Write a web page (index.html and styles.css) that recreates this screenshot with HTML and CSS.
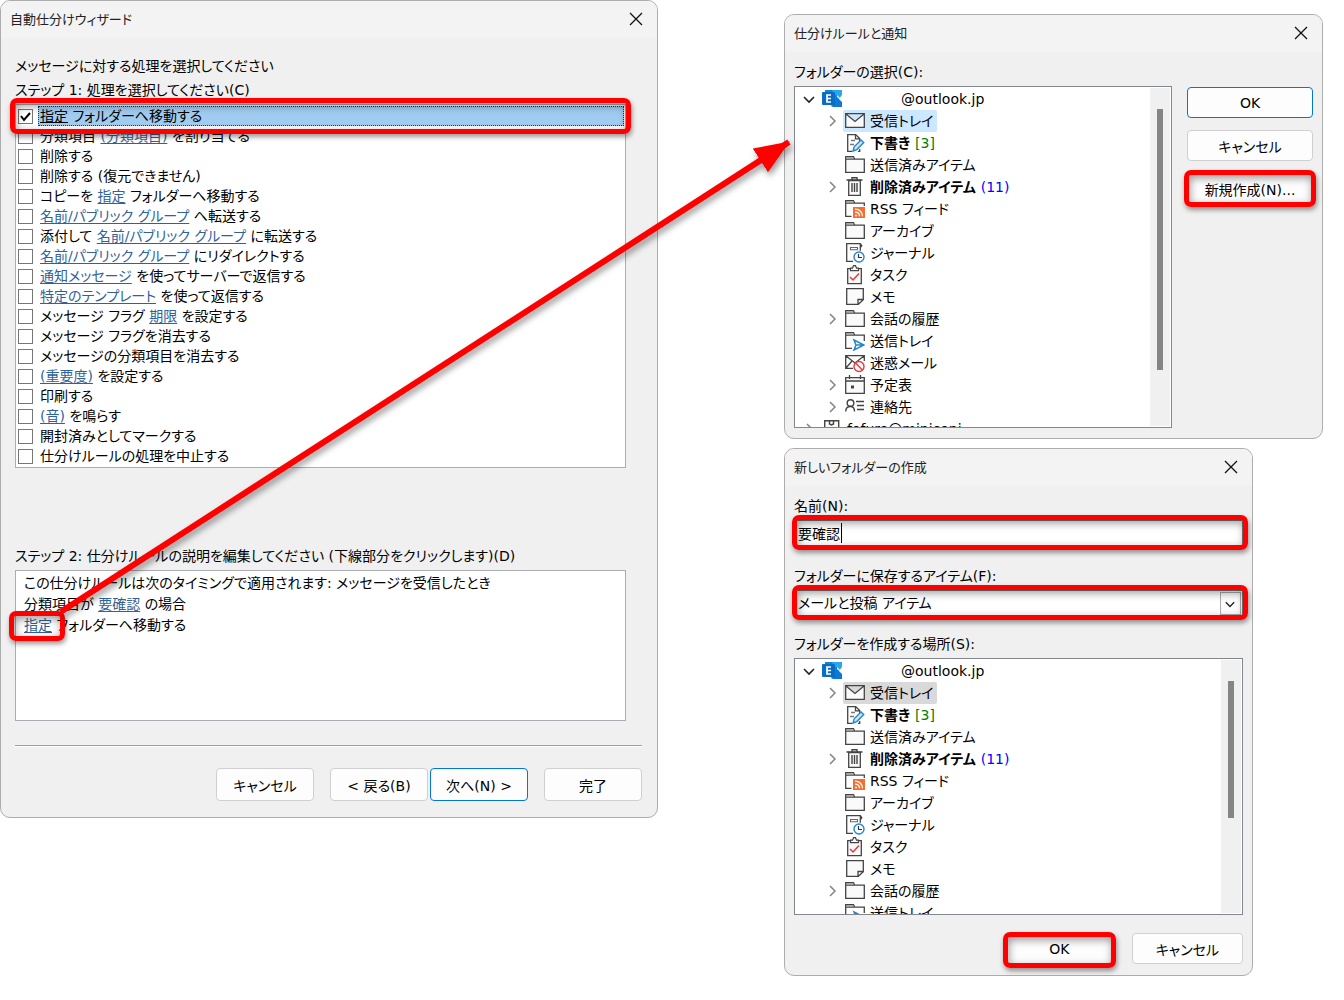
FILE: index.html
```html
<!DOCTYPE html>
<html lang="ja">
<head>
  <meta charset="UTF-8" />
  <meta name="viewport" content="width=device-width, initial-scale=1.0"/>
  <title>自動仕分けウィザード</title>
  <link rel="stylesheet" href="styles.css">
</head>
<body>

  <!-- アイコン -->
  <svg class="sprite" aria-hidden="true">
    <symbol id="i-close" viewBox="0 0 14 14"><path d="M1 1l12 12M13 1L1 13" fill="none" stroke="#111" stroke-width="1.3"/></symbol>
    <symbol id="i-right" viewBox="0 0 12 12"><path d="M4 1l5 5-5 5" fill="none" stroke="#858585" stroke-width="1.5"/></symbol>
    <symbol id="i-down" viewBox="0 0 12 12"><path d="M1 4l5 5 5-5" fill="none" stroke="#222" stroke-width="1.6"/></symbol>
    <symbol id="i-exchange" viewBox="0 0 20 20">
      <path d="M3 1h8l4 5v10H3z" fill="#1482cf"/>
      <path d="M10 1h10v6l-2 2-3-3h-3z" fill="#28a8ea"/>
      <path d="M9 17l6-9 5 4v6H11z" fill="#0f78d4"/>
      <path d="M20 6v7l-3-3z" fill="#fff"/>
      <rect x="0" y="3" width="13" height="13" rx="1" fill="#0a6cc4"/>
      <path d="M9 6H5v7h4M5 9.500h4" fill="none" stroke="#fff" stroke-width="1.700"/>
    </symbol>
    <symbol id="i-mail" viewBox="0 0 20 20"><path d="M.7 2.700h18.600v13.600H.7zM1 3l9 7.500L19 3" fill="#fafafa" stroke="#444" stroke-width="1.300"/></symbol>
    <symbol id="i-draft" viewBox="0 0 20 20">
      <path d="M7 18.400H2.700V1.600h8l4 4V8M10.500 1.600v4.200h4.200M14.700 16v2.400H13" fill="none" stroke="#444" stroke-width="1.300"/>
      <path d="M6 7.500h4M5 11.500h4" stroke="#777" stroke-width="1.300"/>
      <path d="M8 18l1.200-4.200L16 7l2.700 2.600L11.800 16.600z" fill="#cfe6f7" stroke="#2386cc" stroke-width="1.400"/>
    </symbol>
    <symbol id="i-folder" viewBox="0 0 20 20"><path d="M.7 4.200h18.600v13.100H.7zM.7 4.200V1.700h7.800l1.200 2.500" fill="#fafafa" stroke="#444" stroke-width="1.300"/><path d="M1 2.300h7.500v1.200H1z" fill="#999"/></symbol>
    <symbol id="i-trash" viewBox="0 0 20 20"><path d="M3.700 3.500h11.600v14.800H3.700z" fill="#fafafa" stroke="#444" stroke-width="1.300"/><path d="M1.500 3h16M7 2.500V.800h5v1.700M7 6v9M9.500 6v9M12 6v9" fill="none" stroke="#444" stroke-width="1.400"/></symbol>
    <symbol id="i-rss" viewBox="0 0 20 20">
      <path d="M6.500 17.300H.7V1.700h7.800l1.200 2.500h9.600V7M.7 4.200h9" fill="none" stroke="#444" stroke-width="1.300"/><path d="M1 2.300h7.500v1.200H1z" fill="#999"/>
      <rect x="8" y="8" width="12" height="11" fill="#f36f30"/>
      <path d="M10 10.200c4.500 0 7.500 3 7.500 7M10 13.200c3 0 4.500 1.800 4.500 4" fill="none" stroke="#fff" stroke-width="1.300"/><circle cx="11" cy="16.500" r="1" fill="#fff"/>
    </symbol>
    <symbol id="i-journal" viewBox="0 0 20 20">
      <path d="M8 18.300H1.700V.700h13.600l1.500 2-1.500 2v3M15.300.700v7" fill="none" stroke="#444" stroke-width="1.300"/>
      <path d="M5.500 4.500h7v2.300h-7z" fill="none" stroke="#666" stroke-width="1.100"/>
      <circle cx="14" cy="14" r="5" fill="#fff" stroke="#2386cc" stroke-width="1.400"/><path d="M13.500 11v3.500H17" fill="none" stroke="#333" stroke-width="1.200"/>
    </symbol>
    <symbol id="i-task" viewBox="0 0 20 20">
      <path d="M2.700 3.700h13.600v15H2.700z" fill="#fafafa" stroke="#444" stroke-width="1.300"/>
      <path d="M5.500 5.700V3.200h2L8.500.700h2l1 2.500h2v2.500z" fill="#fff" stroke="#444" stroke-width="1.200"/>
      <path d="M5 12l3 3 6-6.500" fill="none" stroke="#e8373b" stroke-width="1.500"/>
    </symbol>
    <symbol id="i-note" viewBox="0 0 20 20"><path d="M1.700 1.700h16.600v11l-5 4.600H1.700zM18 12.500h-5v4.700" fill="#fafafa" stroke="#444" stroke-width="1.300"/></symbol>
    <symbol id="i-outbox" viewBox="0 0 20 20">
      <path d="M7 17.300H.7V1.700h7.800l1.200 2.500h9.600V10M.7 4.200h9" fill="none" stroke="#444" stroke-width="1.300"/><path d="M1 2.300h7.500v1.200H1z" fill="#999"/>
      <path d="M9 9l10 5-10 5 2-5zM11 14h8" fill="none" stroke="#2386cc" stroke-width="1.500"/>
    </symbol>
    <symbol id="i-junk" viewBox="0 0 20 20">
      <path d="M8 15.300H.7V2.700h18.600V8M1 3l9 7 9-7M1 15l6-7" fill="none" stroke="#444" stroke-width="1.300"/>
      <circle cx="14" cy="13.500" r="5" fill="#fff" stroke="#e8373b" stroke-width="1.400"/><path d="M10.500 10l7 7" stroke="#e8373b" stroke-width="1.400"/>
    </symbol>
    <symbol id="i-calendar" viewBox="0 0 20 20"><path d="M.7 2.700h18.600v15.600H.7z" fill="#fafafa" stroke="#444" stroke-width="1.300"/><path d="M1 6h18M4.500 0v4M15.500 0v4" stroke="#444" stroke-width="1.300"/><path d="M6 10.500h3v3H6z" fill="#444"/></symbol>
    <symbol id="i-contact" viewBox="0 0 20 20"><circle cx="5.500" cy="6" r="3.300" fill="none" stroke="#444" stroke-width="1.400"/><path d="M.7 14.500c0-3.500 2-5 4.800-5s4 1.500 4 5M11 4.500h8M12 8.500h7M12 12.500h7" fill="none" stroke="#444" stroke-width="1.400"/></symbol>
    <symbol id="i-store" viewBox="0 0 20 20"><path d="M2.700 1.700h14v16h-14z" fill="#fafafa" stroke="#444" stroke-width="1.400"/><path d="M7.500 2v3l2 1 2-1V2" fill="none" stroke="#444" stroke-width="1.400"/></symbol>
  </svg>

  <main class="canvas">

    <!-- 自動仕分けウィザード -->
    <section class="dialog wizard">
      <header class="titlebar">
        <h1>自動仕分けウィザード</h1>
        <button class="close" aria-label="閉じる"><svg><use href="#i-close"/></svg></button>
      </header>
      <div class="wizard-body">
        <p class="line">メッセージに対する処理を選択してください</p>
        <p class="line">ステップ 1: 処理を選択してください(C)</p>
        <ul class="actions">
          <li class="selected marked"><input type="checkbox" id="a1" checked><label for="a1"><u>指定</u> フォルダーへ移動する</label></li>
          <li><input type="checkbox" id="a2"><label for="a2">分類項目 <a href="#">(分類項目)</a> を割り当てる</label></li>
          <li><input type="checkbox" id="a3"><label for="a3">削除する</label></li>
          <li><input type="checkbox" id="a4"><label for="a4">削除する (復元できません)</label></li>
          <li><input type="checkbox" id="a5"><label for="a5">コピーを <a href="#">指定</a> フォルダーへ移動する</label></li>
          <li><input type="checkbox" id="a6"><label for="a6"><a href="#">名前/パブリック グループ</a> へ転送する</label></li>
          <li><input type="checkbox" id="a7"><label for="a7">添付して <a href="#">名前/パブリック グループ</a> に転送する</label></li>
          <li><input type="checkbox" id="a8"><label for="a8"><a href="#">名前/パブリック グループ</a> にリダイレクトする</label></li>
          <li><input type="checkbox" id="a9"><label for="a9"><a href="#">通知メッセージ</a> を使ってサーバーで返信する</label></li>
          <li><input type="checkbox" id="a10"><label for="a10"><a href="#">特定のテンプレート</a> を使って返信する</label></li>
          <li><input type="checkbox" id="a11"><label for="a11">メッセージ フラグ <a href="#">期限</a> を設定する</label></li>
          <li><input type="checkbox" id="a12"><label for="a12">メッセージ フラグを消去する</label></li>
          <li><input type="checkbox" id="a13"><label for="a13">メッセージの分類項目を消去する</label></li>
          <li><input type="checkbox" id="a14"><label for="a14"><a href="#">(重要度)</a> を設定する</label></li>
          <li><input type="checkbox" id="a15"><label for="a15">印刷する</label></li>
          <li><input type="checkbox" id="a16"><label for="a16"><a href="#">(音)</a> を鳴らす</label></li>
          <li><input type="checkbox" id="a17"><label for="a17">開封済みとしてマークする</label></li>
          <li><input type="checkbox" id="a18"><label for="a18">仕分けルールの処理を中止する</label></li>
        </ul>
        <p class="line step2">ステップ 2: 仕分けルールの説明を編集してください (下線部分をクリックします)(D)</p>
        <div class="description">
          <p>この仕分けルールは次のタイミングで適用されます: メッセージを受信したとき</p>
          <p>分類項目が <a href="#">要確認</a> の場合</p>
          <p><a href="#" class="marked target">指定</a> フォルダーへ移動する</p>
        </div>
      </div>
      <footer class="wizard-buttons">
        <button class="btn">キャンセル</button>
        <div class="pair">
          <button class="btn">&lt; 戻る(B)</button>
          <button class="btn default">次へ(N) &gt;</button>
        </div>
        <button class="btn">完了</button>
      </footer>
    </section>

    <div class="column">

      <!-- 仕分けルールと通知 -->
      <section class="dialog">
        <header class="titlebar">
          <h2>仕分けルールと通知</h2>
          <button class="close" aria-label="閉じる"><svg><use href="#i-close"/></svg></button>
        </header>
        <div class="dialog-body">
          <p class="label">フォルダーの選択(C):</p>
          <div class="chooser">
            <div class="tree tree-choose">
              <ul>
                <li class="root"><svg class="chev"><use href="#i-down"/></svg><span class="item"><svg><use href="#i-exchange"/></svg><span class="account">@outlook.jp</span></span></li>
                <li><svg class="chev"><use href="#i-right"/></svg><span class="item active"><svg><use href="#i-mail"/></svg>受信トレイ</span></li>
                <li><span class="chev"></span><span class="item"><svg><use href="#i-draft"/></svg><b>下書き</b><span class="drafts">[3]</span></span></li>
                <li><span class="chev"></span><span class="item"><svg><use href="#i-folder"/></svg>送信済みアイテム</span></li>
                <li><svg class="chev"><use href="#i-right"/></svg><span class="item"><svg><use href="#i-trash"/></svg><b>削除済みアイテム</b><span class="unread">(11)</span></span></li>
                <li><span class="chev"></span><span class="item"><svg><use href="#i-rss"/></svg>RSS フィード</span></li>
                <li><span class="chev"></span><span class="item"><svg><use href="#i-folder"/></svg>アーカイブ</span></li>
                <li><span class="chev"></span><span class="item"><svg><use href="#i-journal"/></svg>ジャーナル</span></li>
                <li><span class="chev"></span><span class="item"><svg><use href="#i-task"/></svg>タスク</span></li>
                <li><span class="chev"></span><span class="item"><svg><use href="#i-note"/></svg>メモ</span></li>
                <li><svg class="chev"><use href="#i-right"/></svg><span class="item"><svg><use href="#i-folder"/></svg>会話の履歴</span></li>
                <li><span class="chev"></span><span class="item"><svg><use href="#i-outbox"/></svg>送信トレイ</span></li>
                <li><span class="chev"></span><span class="item"><svg><use href="#i-junk"/></svg>迷惑メール</span></li>
                <li><svg class="chev"><use href="#i-right"/></svg><span class="item"><svg><use href="#i-calendar"/></svg>予定表</span></li>
                <li><svg class="chev"><use href="#i-right"/></svg><span class="item"><svg><use href="#i-contact"/></svg>連絡先</span></li>
                <li class="root"><svg class="chev"><use href="#i-right"/></svg><span class="item"><svg><use href="#i-store"/></svg>fofuro@miniconi</span></li>
              </ul>
              <div class="scrollbar"><div class="thumb"></div></div>
            </div>
            <div class="side">
              <button class="btn default">OK</button>
              <button class="btn">キャンセル</button>
              <button class="btn marked">新規作成(N)...</button>
            </div>
          </div>
        </div>
      </section>

      <!-- 新しいフォルダーの作成 -->
      <section class="dialog create">
        <header class="titlebar">
          <h2>新しいフォルダーの作成</h2>
          <button class="close" aria-label="閉じる"><svg><use href="#i-close"/></svg></button>
        </header>
        <div class="dialog-body">
          <label class="label" for="name">名前(N):</label>
          <div class="field marked">
            <input type="text" id="name" value="要確認">
            <span class="caret"></span>
          </div>
          <label class="label" for="kind">フォルダーに保存するアイテム(F):</label>
          <div class="field marked">
            <select id="kind"><option>メールと投稿 アイテム</option></select>
            <span class="drop"><svg><use href="#i-down"/></svg></span>
          </div>
          <p class="label">フォルダーを作成する場所(S):</p>
          <div class="tree tree-place">
            <ul>
              <li class="root"><svg class="chev"><use href="#i-down"/></svg><span class="item"><svg><use href="#i-exchange"/></svg><span class="account">@outlook.jp</span></span></li>
              <li><svg class="chev"><use href="#i-right"/></svg><span class="item inactive"><svg><use href="#i-mail"/></svg>受信トレイ</span></li>
              <li><span class="chev"></span><span class="item"><svg><use href="#i-draft"/></svg><b>下書き</b><span class="drafts">[3]</span></span></li>
              <li><span class="chev"></span><span class="item"><svg><use href="#i-folder"/></svg>送信済みアイテム</span></li>
              <li><svg class="chev"><use href="#i-right"/></svg><span class="item"><svg><use href="#i-trash"/></svg><b>削除済みアイテム</b><span class="unread">(11)</span></span></li>
              <li><span class="chev"></span><span class="item"><svg><use href="#i-rss"/></svg>RSS フィード</span></li>
              <li><span class="chev"></span><span class="item"><svg><use href="#i-folder"/></svg>アーカイブ</span></li>
              <li><span class="chev"></span><span class="item"><svg><use href="#i-journal"/></svg>ジャーナル</span></li>
              <li><span class="chev"></span><span class="item"><svg><use href="#i-task"/></svg>タスク</span></li>
              <li><span class="chev"></span><span class="item"><svg><use href="#i-note"/></svg>メモ</span></li>
              <li><svg class="chev"><use href="#i-right"/></svg><span class="item"><svg><use href="#i-folder"/></svg>会話の履歴</span></li>
              <li><span class="chev"></span><span class="item"><svg><use href="#i-outbox"/></svg>送信トレイ</span></li>
            </ul>
            <div class="scrollbar"><div class="thumb"></div></div>
          </div>
          <div class="create-buttons">
            <button class="btn marked">OK</button>
            <button class="btn">キャンセル</button>
          </div>
        </div>
      </section>
    </div>

    <!-- 「指定」からフォルダー選択への矢印 -->
    <svg class="arrow" aria-hidden="true">
      <defs>
        <marker id="head" markerUnits="userSpaceOnUse" markerWidth="36" markerHeight="30" refX="34" refY="14" orient="auto">
          <path d="M0 0l35 14L0 28z" fill="#f00"/>
        </marker>
      </defs>
      <line x1="4.500%" y1="612" x2="58.700%" y2="142" stroke="#f00" stroke-width="6" marker-end="url(#head)"/>
    </svg>
  </main>

</body>
</html>
```
FILE: styles.css
```css
* {
  box-sizing: border-box;
}
body {
  margin: 0;
  background: #fff;
  color: #000;
  font-family: "DejaVu Sans", "Noto Sans CJK JP", sans-serif;
  font-size: 14px;
  font-feature-settings: "palt";
}
h1, h2, p, ul {
  margin: 0;
  padding: 0;
}
ul {
  list-style: none;
}
button, input, select {
  font: inherit;
  font-feature-settings: inherit;
  color: inherit;
}
a {
  color: #2f6299;
  text-underline-offset: 2px;
}
.sprite {
  display: none;
}
.canvas {
  position: relative;
  display: grid;
  grid-template-columns: 658fr 539fr;
  column-gap: 126px;
  align-items: start;
  padding-right: 21px;
}
.column {
  padding-top: 14px;
  display: flex;
  flex-direction: column;
  gap: 9px;
}

/* ダイアログ */
.dialog {
  background: #f0f0f0;
  border: 1px solid #adadad;
  border-radius: 10px;
}
.titlebar {
  display: flex;
  justify-content: space-between;
  align-items: center;
  height: 37px;
  padding: 0 14px 2px 9px;
  background: #f3f3f3;
  border-radius: 9px 9px 0 0;
}
.titlebar h1, .titlebar h2 {
  font-size: 13px;
  font-weight: normal;
  color: #222;
}
.close {
  display: flex;
  padding: 0;
  border: 0;
  background: none;
}
.close svg {
  width: 14px;
  height: 14px;
}
.btn {
  height: 31px;
  padding: 0;
  background: #fdfdfd;
  border: 1px solid #d0d0d0;
  border-radius: 4px;
  white-space: nowrap;
}
.btn.default {
  border-color: #0078d4;
}

/* 赤枠 */
.marked {
  position: relative;
}
.marked::after {
  content: "";
  position: absolute;
  inset: -4px;
  border: 5px solid #f00;
  border-radius: 7px;
  box-shadow: 1px 3px 5px rgba(0,0,0,0.4), inset 1px 3px 8px rgba(0,0,0,0.4);
  pointer-events: none;
  z-index: 2;
}

/* ウィザード */
.wizard-body {
  margin: 16px 15px 0 14px;
  padding-bottom: 24px;
  border-bottom: 1px solid #a0a0a0;
  box-shadow: 0 1px #fff;
}
.line {
  line-height: 24px;
}
.actions {
  margin: 2px 16px 0 0;
  padding: 1px;
  background: #fff;
  border: 1px solid #abadb3;
}
.actions li {
  display: flex;
  align-items: center;
  height: 20px;
}
.actions input {
  appearance: none;
  width: 15px;
  height: 15px;
  margin: 0 5px 0 1px;
  background: #fff;
  border: 1px solid #767676;
}
.actions input:checked {
  background: #fff url("data:image/svg+xml,%3Csvg xmlns='http://www.w3.org/2000/svg' viewBox='0 0 13 13'%3E%3Cpath d='M2 6l3 4 6-7' fill='none' stroke='%23000' stroke-width='2'/%3E%3C/svg%3E");
}
.actions label {
  flex: 1;
  padding-left: 2px;
  line-height: 20px;
}
.actions .selected label {
  padding-left: 1px;
  line-height: 18px;
  background: #a0ccf0;
  border: 1px dotted #333;
}
.actions .marked::after {
  inset: -8px -7px;
}
.step2 {
  margin-top: 76px;
}
.description {
  height: 151px;
  margin: 2px 16px 0 0;
  padding: 2px 8px;
  background: #fff;
  border: 1px solid #abadb3;
  line-height: 21px;
}
.target::after {
  inset: -6px -13px -8px -15px;
}
.wizard-buttons {
  display: flex;
  justify-content: flex-end;
  gap: 16px;
  padding: 22px 15px 16px;
}
.wizard-buttons .btn {
  width: 98px;
  height: 33px;
}
.pair {
  display: flex;
  gap: 2px;
}

/* フォルダーの選択 */
.dialog-body {
  padding: 6px 9px 10px;
}
.label {
  display: block;
  line-height: 28px;
}
.chooser {
  display: flex;
  gap: 15px;
}
.side {
  width: 126px;
  display: flex;
  flex-direction: column;
  gap: 12px;
  padding-top: 1px;
}
.side .btn {
  flex: none;
}
.tree {
  flex: 1;
  display: flex;
  padding: 1px 1px 1px 0;
  background: #fff;
  border: 1px solid #828790;
  overflow: hidden;
}
.tree ul {
  flex: 1;
}
.tree li {
  display: flex;
  align-items: center;
  height: 22px;
  padding-left: 31px;
}
.tree .root {
  padding-left: 8px;
}
.chev {
  flex: none;
  width: 12px;
  height: 12px;
  margin-right: 5px;
}
.item {
  display: flex;
  align-items: center;
  height: 22px;
  padding: 0 4px 0 2px;
  line-height: 22px;
  white-space: nowrap;
  border-radius: 2px;
}
.item svg {
  width: 20px;
  height: 20px;
  margin-right: 5px;
}
.active {
  background: #cce8ff;
}
.inactive {
  background: #d9d9d9;
}
.account {
  padding-left: 54px;
}
.drafts, .unread {
  padding-left: 5px;
}
.drafts {
  color: #008000;
}
.unread {
  color: #00f;
}
.scrollbar {
  width: 20px;
  background: #f0f0f0;
}
.thumb {
  width: 6px;
  margin: 21px 0 0 7px;
  background: #858585;
}
.tree-choose {
  height: 342px;
}
.tree-choose .thumb {
  height: 261px;
}

/* 新しいフォルダー */
.create {
  width: 87%;
}
.create .dialog-body {
  padding-bottom: 11px;
}
.field {
  height: 26px;
  margin-bottom: 16px;
}
.field:has(select) {
  margin-bottom: 14px;
}
.field::after {
  inset: -5px -5px -4px -2px;
}
.field input, .field select {
  appearance: none;
  display: block;
  width: 100%;
  height: 26px;
  padding: 0 3px;
  background: #fff;
  border: 1px solid #7a7a7a;
  border-radius: 0;
}
.caret {
  position: absolute;
  left: 47px;
  top: 3px;
  width: 1px;
  height: 20px;
  background: #000;
}
.drop {
  position: absolute;
  right: 2px;
  top: 2px;
  display: grid;
  place-items: center;
  width: 21px;
  height: 23px;
  background: #fdfdfd;
  border: 1px solid #adadad;
  pointer-events: none;
}
.drop svg {
  width: 10px;
  height: 10px;
}
.tree-place {
  height: 257px;
}
.tree-place .thumb {
  height: 137px;
}
.create-buttons {
  display: flex;
  justify-content: flex-end;
  gap: 17px;
  margin-top: 18px;
}
.create-buttons .btn {
  width: 111px;
}
.create-buttons .marked::after {
  inset: -2px -2px -5px;
}

.arrow {
  position: absolute;
  top: 0;
  left: 0;
  width: 100%;
  height: 100%;
  pointer-events: none;
  z-index: 3;
  filter: drop-shadow(2px 4px 3px rgba(0,0,0,0.4));
}
```
